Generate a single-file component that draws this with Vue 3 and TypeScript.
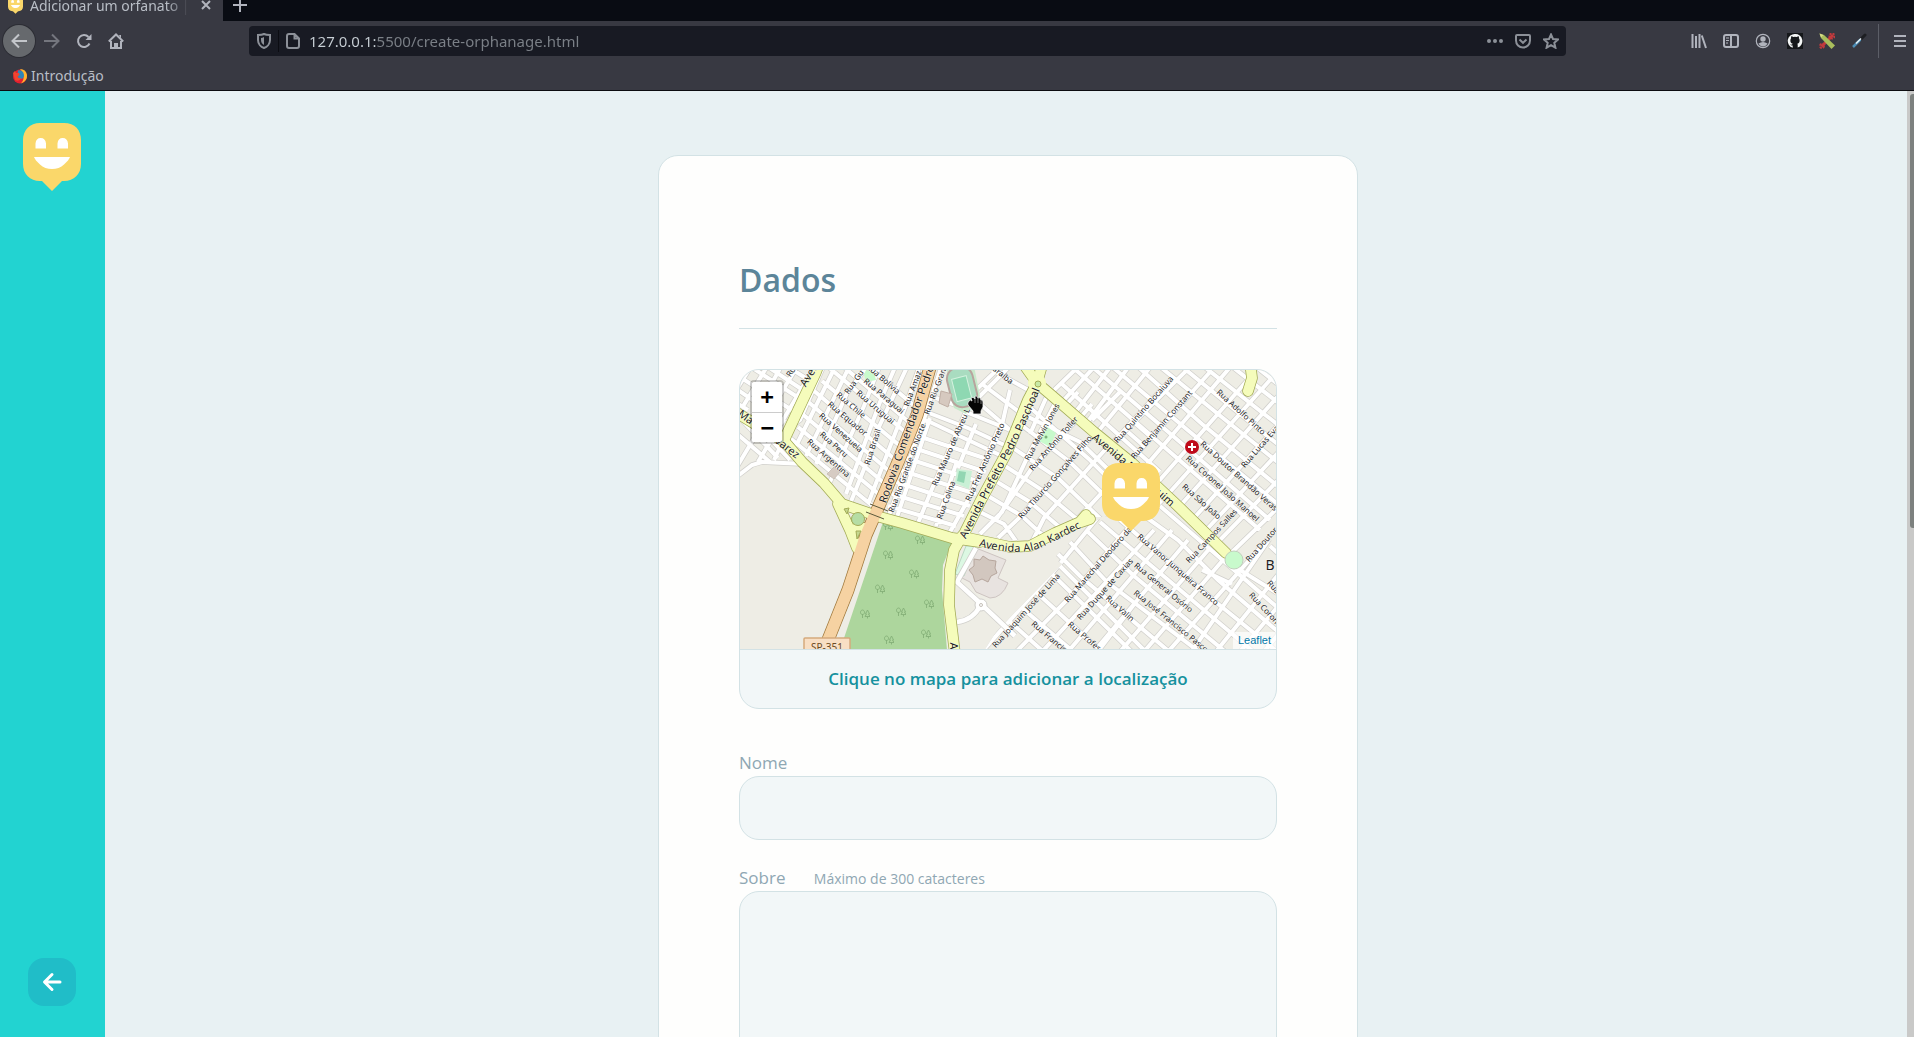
<script setup lang="ts">
import { ref } from 'vue'

type Label = [text: string, x1: number, y1: number, x2: number, y2: number, size?: number]
type Zone = { id: string; area: string; streets: string }

const url = ref('127.0.0.1:5500/create-orphanage.html')
const name = ref('')
const about = ref('')

/* City blocks: each zone clips its own street grid */
const zones: Zone[] = [
  {
    id: 'west',
    area: '-5,-5 78,-5 42,66 55,85 70,99 -5,110',
    streets:
      'M-5 18L45 52M-5 4L55 42M8 -5L62 30M25 -5L66 22M45 -5L72 12M-5 32L8 40M-5 62L30 92M2 50L38 88M22 60L50 90M58 -5L-5 100M42 -5L10 52M28 -5L2 38M12 -5L-5 22M68 8L18 92M48 60L34 90M-5 108L12 95L22 92L65 94',
  },
  {
    id: 'latin',
    area: '78,-5 190,-5 140,140 108,140 86,112 43,66',
    streets:
      'M84 -5L60 50L46 60M96 -5L70 48L56 76M110 -5L66 86M126 -2L107 23L76 94M140 -5L124 36L90 112M156 -5L140 32L106 124M168 -5L138 59L126 94L110 134M180 -5L166 35L128 134M112 -17L177 38M105 -2L176 58M86 -5L170 66M82 11L165 80M73 20L158 92M66 30L155 106M60 42L150 118M58 57L146 130M50 68L140 142',
  },
  {
    id: 'center',
    area: '190,-5 288,-5 290,25 266,82 220,166 140,142',
    streets:
      'M202 -5L182 55L148 148M190 48L162 132L156 150M232 28L194 114L176 158M216 94L196 156M258 60L228 130L210 162M270 20L262 55L246 92M176 38L228 58L262 74L280 80M178 48L190 52L262 86M172 64L250 90M168 76L246 102M166 88L240 112M160 100L236 124M156 112L230 136M152 124L224 146M148 136L216 156M228 38L270 -4M236 20L262 -5M242 14L290 50M252 0L292 22M226 42L280 64M196 28L230 40M240 34L284 72M218 98L236 54',
  },
  {
    id: 'middle',
    area: '290,25 308,25 352,66 432,140 352,148 300,170 240,170 226,158 268,84',
    streets:
      'M322 20L287 88L262 142L240 164M344 42L292 98L256 150M356 62L280 147L258 168M372 72L304 148L292 172M394 88L318 170M412 104L340 176M430 122L360 194M284 45L340 72L420 150M280 54L330 92L400 160M270 76L318 108L370 158M262 94L302 120L350 160M254 110L290 132L330 166M248 126L282 146L310 172M240 142L264 154L278 174M306 28L290 64M286 34L350 90L396 136',
  },
  {
    id: 'north',
    area: '308,-5 545,-5 545,170 492,186 440,134 394,92 314,22',
    streets:
      'M340 -5L310 24M356 -5L322 32M372 -5L334 44M390 -5L346 54M412 -5L356 64M432 8L368 78M452 -5L374 72M470 2L393 88M492 -5L404 98M512 5L418 112M530 10L430 122M548 15L440 136M550 42L454 148M550 70L468 158M550 98L480 170M550 126L488 186M330 -5L430 82L520 160M350 -5L440 72L530 150M370 -5L450 62L545 140M396 -5L462 54L545 122M418 -5L478 44L545 98M440 -5L500 44L545 80M462 -5L524 44L545 60M490 -5L545 38M514 -5L545 20M322 14L420 102M338 22L325 36M352 34L340 48M382 20L352 50M388 62L404 76M396 54L412 68M444 148L530 240',
  },
  {
    id: 'south',
    area: '400,134 432,134 490,188 545,165 545,284 242,284 256,262 322,194 296,176 352,152',
    streets:
      'M372 130L319 195L240 284M400 144L327 230L274 284M414 160L300 284M432 160L326 284M448 170L352 284M470 178L378 284M495 176L402 284M520 178L426 284M537 158L450 284M550 190L474 284M550 222L498 284M550 250L522 284M396 140L438 170L478 210L550 272M380 150L477 233L540 284M360 152L395 182L452 230L516 284M346 160L394 206L488 284M330 172L367 212L462 284M318 184L340 206L432 284M320 196L408 284M312 204L394 284M296 222L364 284M282 238L336 284M268 250L306 284M420 136L545 244M440 140L500 200L545 228M462 200L492 214M356 284L402 224M530 176L545 190',
  },
]

/* Street names, each laid along the segment it belongs to */
const labels: Label[] = [
  ['Rua', 47, 8, 57, -8],
  ['Rua Gu', 107, 22, 121, 2],
  ['Rua Bolívia', 125, -7, 162, 25],
  ['Rua Paraguai', 125, 10, 163, 42],
  ['Rua Uruguai', 118, 22, 153, 52],
  ['Rua Chile', 98, 24, 124, 46],
  ['Rua Equador', 89, 33, 126, 64],
  ['Rua Venezuela', 80, 44, 122, 81],
  ['Rua Peru', 81, 63, 107, 86],
  ['Rua Argentina', 68, 70, 109, 106],
  ['Rua Brasil', 127, 94, 138, 60],
  ['Rua Amaz', 166, 36, 179, 1],
  ['Rua Rio Gran', 187, 43, 203, 0],
  ['Rua Rio Grande do Norte', 151, 142, 183, 54],
  ['Rua Mauro de Abreu L', 194, 116, 228, 38],
  ['Rua Frei Antônio Preto', 228, 130, 262, 54],
  ['Rua Colina', 199, 149, 213, 111],
  ['araíba', 253, -3, 273, 13],
  ['Rua Quintino Bocaiuva', 375, 72, 432, 7],
  ['Rua Benjamin Constant', 392, 88, 451, 21],
  ['Rua Adolfo Pinto', 478, 21, 524, 63],
  ['Rua Lucas Evan', 502, 97, 541, 52],
  ['Rua Doutor Brandão Veras', 462, 73, 536, 139],
  ['Rua Coronel João Manoel', 447, 87, 518, 150],
  ['Rua São João', 443, 115, 480, 148],
  ['Rua Melvin Jones', 287, 89, 317, 35],
  ['Rua Antônio Toller', 291, 99, 336, 48],
  ['Rua Tiburcio Gonçalves Filho', 279, 148, 351, 66],
  ['Rua Marechal Deodoro da', 326, 231, 390, 158],
  ['Rua Vanor Junqueira Franco', 398, 165, 478, 234],
  ['Rua Campos Salles', 447, 192, 496, 140],
  ['Rua General Osório', 395, 194, 452, 241],
  ['Rua Duque de Caxias', 338, 249, 392, 189],
  ['Rua José Francisco Pasco', 394, 221, 468, 281],
  ['Rua Valin', 367, 227, 393, 250],
  ['Rua Profess', 329, 253, 363, 282],
  ['Rua Francis', 292, 252, 326, 281],
  ['Rua Joaquim José de Lima', 253, 277, 319, 204],
  ['Rua Doutor', 506, 192, 537, 157],
  ['Rua Coron', 510, 223, 538, 253],
  ['Rua', 528, 211, 539, 223],
  ['Aven', 62, 16, 76, -7, 11],
  ['Ma', -1, 42, 13, 52, 11],
  ['varez', 35, 68, 60, 87, 11],
  ['Rodovia Comendador Pedro', 145, 125, 188, 3, 11],
  ['Avenida P', 354, 66, 393, 98, 11],
  ['uim', 417, 120, 434, 135, 11],
  ['A', 214, 271, 214, 281, 11],
]

const majorRoads = [
  'M-8 40L15 54L45 72L62 92L84 113L102 134L140 147L162 153L212 168L240 172',
  'M98 134L110 160L117 178M110 160L124 158',
  'M88 -30L76 2L45 68',
  'M222 168L240 132L267 82L288 30L297 13L282 -8M297 13L303 -8',
  'M297 13L310 24L354 62L392 93L440 138L486 183',
  'M228 168L270 177L290 176L315 163L340 152L346 145M338 153L350 149',
  'M222 166L214 180L210 200L209 235L215 284',
  'M510 -8L512 8L508 21',
]
const highway = 'M192 -10L177 45L158 92L138 138L126 165L108 220L88 270L82 290'

const trees = [
  [148, 156], [180, 170], [148, 185], [174, 204], [140, 219],
  [189, 234], [125, 244], [161, 242], [186, 264], [149, 270],
]

function place(l: Label): string {
  const angle = (Math.atan2(l[4] - l[2], l[3] - l[1]) * 180) / Math.PI
  return `translate(${(l[1] + l[3]) / 2} ${(l[2] + l[4]) / 2}) rotate(${angle})`
}
</script>

<template>
  <svg class="defs" aria-hidden="true">
    <symbol id="happy" viewBox="0 0 58 68">
      <path d="M17 0H41C52 0 58 7 58 17V41C58 51 51 58 41 58H39L29 68L19 58H17C7 58 0 51 0 41V17C0 7 7 0 17 0Z" fill="#fad76a" />
      <path d="M12.500 25.500V20.500Q13 15 17.700 15T23 20.500V25.500ZM34.500 25.500V20.500Q35 15 39.700 15T45 20.500V25.500ZM11 34H47Q46 37 41 41.500C35 47.500 23 47.500 17 41.500Q12 37 11 34Z" fill="#fff" />
    </symbol>
    <symbol id="tree" viewBox="0 0 10 10">
      <path d="M2.500 9V5M7.500 9.500V7.500M2.500 5.500C-1 5 .5 1 2.500 1S6 5 2.500 5.500ZM7.500 1L5.500 5H6.500L5 7.500H10L8.500 5H9.500Z" fill="none" stroke="#84b078" stroke-width=".9" />
    </symbol>
  </svg>

  <div class="window">
    <header class="chrome">
      <div class="tabs">
        <div class="tab">
          <svg class="favicon" width="15" height="18"><use href="#happy" /></svg>
          <span class="tab-title">Adicionar um orfanato | Happy</span>
          <button class="tool tab-close" aria-label="Fechar aba">
            <svg width="12" height="12" viewBox="0 0 12 12"><path d="M2 2l8 8M10 2l-8 8" /></svg>
          </button>
        </div>
        <button class="tool new-tab" aria-label="Nova aba">
          <svg width="14" height="14" viewBox="0 0 14 14"><path d="M7 0v14M0 7h14" /></svg>
        </button>
      </div>

      <div class="toolbar">
        <nav class="nav">
          <button class="tool back" aria-label="Voltar">
            <svg width="16" height="16" viewBox="0 0 16 16"><path d="M16 8H1.500M8 1.500L1.500 8L8 14.500" /></svg>
          </button>
          <button class="tool dim" aria-label="Avançar">
            <svg width="16" height="16" viewBox="0 0 16 16"><path d="M0 8h14.500M8 1.500L14.500 8L8 14.500" /></svg>
          </button>
          <button class="tool" aria-label="Recarregar">
            <svg width="16" height="16" viewBox="0 0 16 16"><path d="M13.500 10.500A6 6 0 1 1 12.500 4" /><path d="M15.500 1v6h-6z" fill="currentColor" stroke="none" /></svg>
          </button>
          <button class="tool" aria-label="Início">
            <svg width="16" height="16" viewBox="0 0 16 16"><path d="M.8 8.500L8 1.500L15.200 8.500M3 8v7h10V8" /><path d="M6 15v-5h4v5zM11 2h2v4z" fill="currentColor" stroke="none" /></svg>
          </button>
        </nav>

        <div class="address">
          <svg width="14" height="16" viewBox="0 0 14 16"><path d="M7 1C9 2 11 2 13 2V7C13 11 10 14 7 15C4 14 1 11 1 7V2C3 2 5 2 7 1Z" /><path d="M7 4V12C5 11 4 9 4 7V5C5 5 6 4.500 7 4Z" fill="currentColor" stroke="none" /></svg>
          <i class="split"></i>
          <svg width="14" height="16" viewBox="0 0 14 16"><path d="M3 1H8.500L13 5.500V13Q13 15 11 15H3Q1 15 1 13V3Q1 1 3 1ZM8.500 1V5.500H13" /></svg>
          <input v-model="url" class="url" type="text" aria-label="Endereço" spellcheck="false" />
          <button class="tool" aria-label="Ações da página">
            <svg width="16" height="16" viewBox="0 0 16 16"><g fill="currentColor" stroke="none"><circle cx="2" cy="8" r="2" /><circle cx="8" cy="8" r="2" /><circle cx="14" cy="8" r="2" /></g></svg>
          </button>
          <button class="tool" aria-label="Salvar no Pocket">
            <svg width="16" height="16" viewBox="0 0 16 16"><path d="M2 2H14Q15 2 15 3V7.500A7 7 0 0 1 1 7.500V3Q1 2 2 2ZM4.500 6.500L8 9.800L11.500 6.500" /></svg>
          </button>
          <button class="tool" aria-label="Adicionar aos favoritos">
            <svg width="16" height="16" viewBox="0 0 16 16"><path d="M8 1.500L10 6L15 6.500L11.300 9.800L12.400 14.700L8 12.200L3.600 14.700L4.700 9.800L1 6.500L6 6Z" /></svg>
          </button>
        </div>

        <div class="extras">
          <button class="tool" aria-label="Biblioteca">
            <svg width="16" height="16" viewBox="0 0 16 16"><path d="M1.500 1v14M5 3v12M8.500 1v14M10.800 2.500L15 15" /></svg>
          </button>
          <button class="tool" aria-label="Barra lateral">
            <svg width="16" height="16" viewBox="0 0 16 16"><rect x="1" y="2" width="14" height="12" rx="2" /><path d="M8 2v12" /><path d="M3 5h3M3 7.500h3M3 10h2" stroke-width="1" /></svg>
          </button>
          <button class="tool" aria-label="Conta">
            <svg width="16" height="16" viewBox="0 0 16 16"><circle cx="8" cy="8" r="6.700" stroke-width="1.200" /><circle cx="8" cy="6" r="2.700" fill="currentColor" stroke="none" /><path d="M3.500 10.500Q8 7.500 12.500 10.500Q11 13.500 8 13.500T3.500 10.500Z" fill="currentColor" stroke="none" /></svg>
          </button>
          <button class="tool" aria-label="GitHub">
            <svg width="16" height="16" viewBox="0 0 16 16"><rect width="16" height="16" fill="#15171a" stroke="none" /><path d="M8 1a7 7 0 0 0-2.300 13.700V12.500Q3.800 13 3.300 11.300Q4.500 11.800 5 11.600Q5.200 11 5.700 10.700C3.500 10.300 3.300 8.500 3.400 7Q3.500 6 4.100 5.300Q3.900 4 4.300 3.200Q5.500 3.300 6.400 4Q8 3.600 9.600 4Q10.500 3.300 11.700 3.200Q12.100 4 11.900 5.300Q12.500 6 12.600 7C12.700 8.500 12.500 10.300 10.300 10.700Q10.700 11 10.700 12V14.600A7 7 0 0 0 8 1Z" fill="#f4f6f6" stroke="none" /></svg>
          </button>
          <button class="tool" aria-label="Extensão de estilos">
            <svg width="16" height="16" viewBox="0 0 16 16"><path d="M14 2L2.500 13.500" stroke="#c33a3d" stroke-width="3" /><circle cx="13" cy="3" r="2.500" stroke="#c33a3d" stroke-dasharray="2 1" /><circle cx="3" cy="13" r="2" stroke="#c33a3d" stroke-dasharray="2 1" /><path d="M.5 .5L5 2L16 12.500L12.500 16L2 5Z" fill="#a9be5c" stroke="none" /><path d="M.5 .5L4.500 2L2 4.500Z" fill="#d6dc88" stroke="none" /></svg>
          </button>
          <button class="tool" aria-label="Seletor de cores">
            <svg width="16" height="16" viewBox="0 0 16 16"><path d="M9 7L14 2" stroke="#1d1e22" stroke-width="3" stroke-linecap="round" /><path d="M9.500 6.500L2 14" stroke="#4f8fb8" stroke-width="2.500" /><path d="M10 5.500L5 10.500" stroke="#eaf3f7" stroke-width="1.500" /></svg>
          </button>
          <i class="divider"></i>
          <button class="tool menu" aria-label="Menu">
            <svg width="14" height="16" viewBox="0 0 14 16"><path d="M1 3h12M1 8h12M1 13h12" /></svg>
          </button>
        </div>
      </div>

      <div class="bookmarks">
        <a class="bookmark" href="#">
          <svg width="16" height="16" viewBox="0 0 16 16">
            <circle cx="8" cy="8.500" r="7" fill="#e3202f" />
            <path d="M8 1Q14 1 15 7Q15.500 13 9 15.500Q13 11 11 6Q10 3 8 1Z" fill="#ffb52e" />
            <path d="M6 2.500Q11 1.500 12 7Q12 11 8.500 11Q5 10 5.500 7Z" fill="#2f86b8" />
            <path d="M1 5L3 3L4 5L7 5L7.500 7L5.500 8.500Q6 11 9.500 10Q7 14 3 12Z" fill="#f2452f" />
          </svg>
          <span>Introdução</span>
        </a>
      </div>
    </header>

    <div class="page">
      <aside class="sidebar">
        <svg width="58" height="68"><use href="#happy" /></svg>
        <button class="go-back" aria-label="Voltar ao mapa">
          <svg width="24" height="24" viewBox="0 0 24 24"><path d="M20 12H5M12 4.500L4.500 12L12 19.500" /></svg>
        </button>
      </aside>

      <main class="content">
        <form class="card" @submit.prevent>
          <h1 class="legend">Dados</h1>

          <div class="map-box">
            <div class="map">
              <svg class="map-canvas" viewBox="0 0 536 279" preserveAspectRatio="xMidYMid slice" role="img" aria-label="Mapa">
                <defs>
                  <clipPath v-for="z in zones" :id="z.id" :key="z.id"><polygon :points="z.area" /></clipPath>
                  <path id="paschoal" d="M219 174Q250 113 266 84T299 12" />
                  <path id="kardec" d="M234 171Q280 184 302 173T344 152" />
                </defs>
                <rect width="536" height="279" fill="#eeede5" />

                <polygon points="143,152 212,172 203,195 202,220 207,280 100,280" fill="#add69d" />
                <use v-for="(t, i) in trees" :key="i" href="#tree" :x="t[0] - 5" :y="t[1] - 5" width="10" height="10" />

                <g v-for="z in zones" :key="z.id" :clip-path="`url(#${z.id})`" fill="none">
                  <path :d="z.streets" stroke="#d0cfcb" stroke-width="5.400" />
                  <path :d="z.streets" stroke="#fff" stroke-width="4" />
                </g>

                <path d="M236 178L266 190L258 208L268 213Q262 228 250 228L236 222L230 212L220 207Z" fill="#e8e3e0" stroke="#cdc4c1" stroke-width="1" />
                <path d="M243 186L249 190L256 191L255 198L257 203L251 206L248 212L242 209L235 212L233 205L229 200L234 196L234 189L240 190Z" fill="#d2c7bf" stroke="#b6a69d" stroke-width="1" />
                <path d="M226 176L236 176L224 206L215 204Z" fill="#dcf8e3" stroke="#b9d8c3" stroke-width="1" />
                <g fill="none">
                  <path d="M236 178L217 212L240 233L275 266M217 252Q233 250 240 236" stroke="#d0cfcb" stroke-width="6" />
                  <circle cx="241" cy="235" r="6" fill="#fff" stroke="#d0cfcb" stroke-width="1" />
                  <path d="M236 178L217 212L240 233L275 266M217 252Q233 250 240 236" stroke="#fff" stroke-width="4.500" />
                  <circle cx="241" cy="235" r="1.500" stroke="#c4bfb8" stroke-width="1" />
                </g>

                <path d="M207 0L234 -4L240 26L226 44L214 38L208 18Z" fill="#c8e9cb" />
                <rect x="209" y="-3" width="26" height="40" rx="11" transform="rotate(-14 222 17)" fill="#a9dcc0" stroke="#b8a49d" stroke-width="2" />
                <rect x="214" y="7" width="15" height="23" transform="rotate(-14 222 18)" fill="#8ed8b2" stroke="#d5f2df" stroke-width="1" />
                <polygon points="201,21 212,24 208,37 199,33" fill="#d6c9bf" stroke="#c0afa5" />
                <polygon points="217,99 232,101 229,119 215,113" fill="#c9f0d6" />
                <polygon points="219,101 226,102 224,113 217,111" fill="#92d6b2" />
                <polygon points="306,56 316,63 310,77 299,71" fill="#c8facc" />
                <circle cx="306" cy="67" r="1.500" fill="#7bb07a" />
                <polygon points="126,0 134,2 136,10 126,12 124,5" fill="#c8facc" />
                <polygon points="94,97 100,102 94,109 87,104" fill="#d6cbc3" stroke="#c0b4ac" stroke-width=".7" />

                <g fill="none" stroke-linejoin="round" stroke-linecap="round">
                  <path v-for="r in majorRoads" :key="r" :d="r" stroke="#a3ab57" stroke-width="11.500" />
                  <path :d="highway" stroke="#a0793c" stroke-width="13" />
                  <path v-for="r in majorRoads" :key="r" :d="r" stroke="#f5fcbb" stroke-width="10" />
                  <path :d="highway" stroke="#f6d2a2" stroke-width="11.500" />
                </g>
                <path d="M126 142L144 149M130 134L148 141" stroke="#5c5a3c" stroke-width="1" />
                <circle cx="118" cy="149" r="6.500" fill="#b6dda4" stroke="#a3ab57" />
                <path d="M104 139L109 138L107 144ZM116 161L121 161L117 169Z" fill="#c5d78f" stroke="#a3ab57" />
                <circle cx="297" cy="13" r="9" fill="#f5fcbb" />
                <circle cx="298" cy="14" r="3" fill="#c8e9a5" stroke="#a3ab57" />
                <circle cx="494" cy="190" r="9" fill="#c8facc" stroke="#c1cfbd" />

                <g class="names">
                  <text v-for="(l, i) in labels" :key="i" :transform="place(l)" :font-size="l[5] ?? 8" dy=".35em">{{ l[0] }}</text>
                  <text font-size="11" dy=".35em"><textPath href="#paschoal" startOffset="50%">Avenida Prefeito Pedro Paschoal</textPath></text>
                  <text font-size="11" dy=".35em"><textPath href="#kardec" startOffset="50%">Avenida Alan Kardec</textPath></text>
                  <text x="530" y="200" font-size="14">B</text>
                </g>

                <rect x="64" y="268" width="46" height="20" rx="1" fill="#f8dfc4" stroke="#d5ab7c" stroke-width="1.500" />
                <text class="shield" x="87" y="281" font-size="10">SP-351</text>

                <circle cx="452" cy="77" r="7" fill="#bf0a1a" />
                <path d="M452 73V81M448 77H456" stroke="#fff" stroke-width="2" />
                <use href="#happy" x="362" y="93" width="58" height="68" />
                <path d="M229 31Q230 29 232 31L231 28Q233 26 235 29L235 26Q237 25 238 28Q240 26 241 30Q243 29 243 32V37L241 41V44H233V41L228 35Q227 33 229 31Z" fill="#050505" stroke="#f5f5f5" stroke-width=".8" />
                <path d="M235 28V33M238 28V33M241 30V34" stroke="#bbb" stroke-width=".6" />
              </svg>
              <div class="zoom">
                <button type="button" aria-label="Aproximar">+</button>
                <button type="button" aria-label="Afastar">−</button>
              </div>
              <a class="credit" href="#">Leaflet</a>
            </div>
            <p class="map-hint">Clique no mapa para adicionar a localização</p>
          </div>

          <div class="field">
            <label for="name">Nome</label>
            <input id="name" v-model="name" type="text" />
          </div>
          <div class="field">
            <label for="about">Sobre <span class="note">Máximo de 300 catacteres</span></label>
            <textarea id="about" v-model="about" maxlength="300"></textarea>
          </div>
        </form>
      </main>
      <div class="scrollbar"><div class="thumb"></div></div>
    </div>
  </div>
</template>

<style>
body {
  overflow: hidden;
}
</style>

<style scoped>
* {
  box-sizing: border-box;
}
.defs {
  position: absolute;
  width: 0;
  height: 0;
}
.window {
  display: flex;
  flex-direction: column;
  height: 100vh;
  overflow: hidden;
  font-family: 'Open Sans', sans-serif;
}
.chrome {
  flex: none;
  background: #383942;
  border-bottom: 1px solid #0c0c10;
  color: #b9bec6;
  font-family: 'Noto Sans', sans-serif;
  font-size: 14px;
}
.tool {
  display: flex;
  align-items: center;
  justify-content: center;
  width: 32px;
  height: 32px;
  padding: 0;
  border: 0;
  background: none;
  color: #b1b4bd;
}
svg {
  display: block;
  flex: none;
}
.tool svg,
.address > svg {
  fill: none;
  stroke: currentColor;
  stroke-width: 2;
}
.tabs {
  display: flex;
  align-items: flex-end;
  height: 21px;
  overflow: hidden;
  background: #090c13;
}
.tab {
  flex: none;
  display: flex;
  align-items: center;
  width: 223px;
  height: 32px;
  padding-left: 8px;
  background: #383942;
}
.tab-title {
  flex: 1;
  margin-left: 7px;
  overflow: hidden;
  white-space: nowrap;
  mask-image: linear-gradient(90deg, #000 86%, transparent 100%);
}
.tab-close {
  width: 34px;
}
.new-tab {
  width: 34px;
}
.toolbar {
  display: flex;
  align-items: center;
  height: 40px;
}
.nav {
  display: flex;
  width: 249px;
  padding-left: 3px;
}
.back {
  margin-right: 1px;
  border-radius: 50%;
  background: #66696d;
  box-shadow: 0 0 0 1px #2c2d34;
  color: #c3c6ca;
}
.nav .dim {
  color: #74767e;
}
.address {
  flex: 1;
  display: flex;
  align-items: center;
  height: 30px;
  padding: 0 1px 0 8px;
  border-radius: 4px;
  background: #181a23;
  color: #8c9098;
}
.address .tool {
  width: 28px;
  color: #8c9098;
}
.split {
  width: 1px;
  height: 22px;
  margin: 0 7px;
  background: #0b0c12;
}
.url {
  flex: 1;
  min-width: 0;
  margin-left: 9px;
  padding: 0;
  border: 0;
  outline: 0;
  font: inherit;
  font-size: 15px;
  color: transparent;
  background: linear-gradient(90deg, #c9d0d6 67px, #7b8087 67px);
  background-clip: text;
}
.extras {
  display: flex;
  align-items: center;
  justify-content: flex-end;
  width: 348px;
}
.divider {
  width: 1px;
  height: 34px;
  margin: 0 7px 0 3px;
  background: #5c5e67;
}
.extras .menu {
  width: 28px;
}
.bookmarks {
  display: flex;
  align-items: center;
  height: 29px;
  padding-left: 12px;
}
.bookmark {
  display: flex;
  align-items: center;
  gap: 3px;
  color: inherit;
  text-decoration: none;
}
.page {
  flex: 1;
  display: flex;
  min-height: 0;
  background: #e8f1f3;
}
.sidebar {
  flex: none;
  display: flex;
  flex-direction: column;
  align-items: center;
  justify-content: space-between;
  width: 105px;
  padding: 32px 1px 31px 0;
  background: #22d3d1;
}
.go-back {
  display: flex;
  align-items: center;
  justify-content: center;
  width: 48px;
  height: 48px;
  border: 0;
  border-radius: 16px;
  background: #20bdc8;
}
.go-back svg {
  fill: none;
  stroke: #fff;
  stroke-width: 3;
  stroke-linecap: round;
  stroke-linejoin: round;
}
.content {
  flex: 1;
  overflow: hidden;
  padding: 64px 16px 0 20px;
}
.card {
  width: 100%;
  max-width: 700px;
  margin: 0 auto;
  padding: 80px;
  border: 1px solid #d3e2e5;
  border-radius: 20px;
  background: #fefefd;
}
.legend {
  margin: 0 0 40px;
  padding: 21px 0 25px;
  border-bottom: 1px solid #d3e2e5;
  color: #5c8599;
  font-size: 32px;
  font-weight: 600;
  line-height: 46px;
}
.map-box {
  overflow: hidden;
  border: 1px solid #d3e2e5;
  border-radius: 20px;
  background: #f2f7f8;
}
.map {
  position: relative;
}
.map-canvas {
  width: 100%;
  height: 279px;
}
.names text {
  fill: #1f1f1f;
  stroke: #fff;
  stroke-width: 1px;
  stroke-opacity: 0.6;
  paint-order: stroke;
  text-anchor: middle;
  font-family: 'Noto Sans', sans-serif;
}
.shield {
  fill: #6b4b23;
  text-anchor: middle;
  font-family: 'Noto Sans', sans-serif;
}
.zoom {
  position: absolute;
  top: 10px;
  left: 10px;
  overflow: hidden;
  border: 2px solid rgba(0, 0, 0, 0.2);
  border-radius: 4px;
  background-clip: padding-box;
}
.zoom button {
  display: block;
  width: 30px;
  height: 30px;
  padding: 0;
  border: 0;
  background: #fff;
  color: #000;
  font: bold 22px/30px 'DejaVu Sans Mono', monospace;
}
.zoom button + button {
  border-top: 1px solid #ccc;
  line-height: 28px;
}
.credit {
  position: absolute;
  right: 0;
  bottom: 0;
  padding: 0 5px;
  background: rgba(255, 255, 255, 0.7);
  color: #0078a8;
  font: 11px/17px 'Liberation Sans', Arial, sans-serif;
  text-decoration: none;
}
.map-hint {
  margin: 0;
  border-top: 1px solid #d3e2e5;
  color: #15919e;
  font-size: 17px;
  font-weight: 600;
  line-height: 58px;
  text-align: center;
}
.field {
  margin-top: 24px;
}
.map-box + .field {
  margin-top: 40px;
}
.field label {
  display: block;
  color: #8fa7b3;
  font-size: 17px;
  line-height: 27px;
}
.note {
  margin-left: 24px;
  font-size: 14px;
  line-height: 20px;
}
.field input,
.field textarea {
  display: block;
  width: 100%;
  height: 64px;
  padding: 16px;
  border: 1px solid #d3e2e5;
  border-radius: 20px;
  outline: 0;
  background: #f2f7f8;
  color: #5c8599;
  font: inherit;
  resize: none;
}
.field textarea {
  height: 240px;
}
.scrollbar {
  flex: none;
  width: 7px;
  padding: 3px 0 0 3px;
  background: #c9c9c8;
}
.thumb {
  height: 46%;
  border-radius: 3px 0 0 3px;
  background: #7d817f;
}
</style>
